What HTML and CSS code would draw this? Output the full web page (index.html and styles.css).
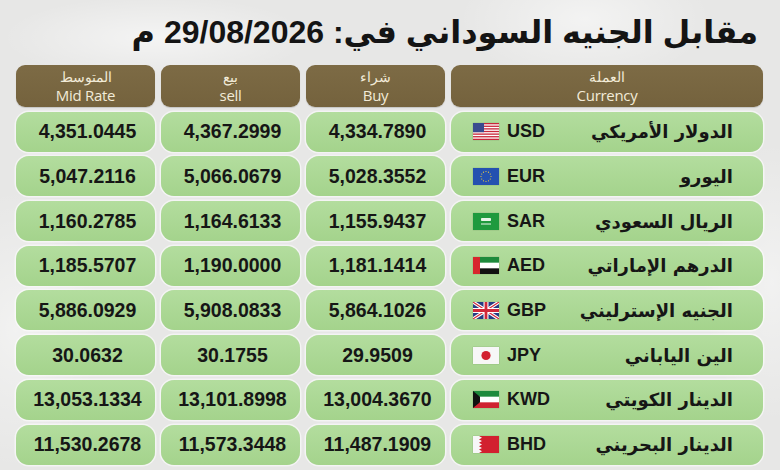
FILE: index.html
```html
<!DOCTYPE html>
<html lang="ar">
<head>
<meta charset="utf-8">
<title>أسعار العملات</title>
<link rel="stylesheet" href="styles.css">
</head>
<body>
<div class="page">
  <h1 class="title" dir="rtl">مقابل الجنيه السوداني في: 29/08/2026 م</h1>
  <div class="table" dir="rtl">
    <div class="head"><span class="ar">العملة</span><span class="en">Currency</span></div>
    <div class="head"><span class="ar">شراء</span><span class="en">Buy</span></div>
    <div class="head"><span class="ar">بيع</span><span class="en">sell</span></div>
    <div class="head"><span class="ar">المتوسط</span><span class="en">Mid Rate</span></div>

    <div class="cur" dir="ltr">
      <svg class="flag" viewBox="0 0 26 17"><rect width="26" height="17" fill="#fff"/><g fill="#c8283a"><rect y="0" width="26" height="1.31"/><rect y="2.62" width="26" height="1.31"/><rect y="5.23" width="26" height="1.31"/><rect y="7.85" width="26" height="1.31"/><rect y="10.46" width="26" height="1.31"/><rect y="13.08" width="26" height="1.31"/><rect y="15.69" width="26" height="1.31"/></g><rect width="11" height="9.2" fill="#3a4b8f"/></svg>
      <span class="code">USD</span><span class="name" dir="rtl">الدولار الأمريكي</span>
    </div>
    <div class="num">4,334.7890</div><div class="num">4,367.2999</div><div class="num">4,351.0445</div>

    <div class="cur" dir="ltr">
      <svg class="flag" viewBox="0 0 26 17"><rect width="26" height="17" fill="#2451b0"/><g fill="#f5d33a"><circle cx="13" cy="3.5" r=".6"/><circle cx="15.5" cy="4.2" r=".6"/><circle cx="17.3" cy="6" r=".6"/><circle cx="18" cy="8.5" r=".6"/><circle cx="17.3" cy="11" r=".6"/><circle cx="15.5" cy="12.8" r=".6"/><circle cx="13" cy="13.5" r=".6"/><circle cx="10.5" cy="12.8" r=".6"/><circle cx="8.7" cy="11" r=".6"/><circle cx="8" cy="8.5" r=".6"/><circle cx="8.7" cy="6" r=".6"/><circle cx="10.5" cy="4.2" r=".6"/></g></svg>
      <span class="code">EUR</span><span class="name" dir="rtl">اليورو</span>
    </div>
    <div class="num">5,028.3552</div><div class="num">5,066.0679</div><div class="num">5,047.2116</div>

    <div class="cur" dir="ltr">
      <svg class="flag" viewBox="0 0 26 17"><rect width="26" height="17" fill="#1f9a3e"/><rect x="8" y="5" width="10" height="3" rx=".8" fill="#e8f5e9"/><rect x="8" y="10.5" width="10" height="1" fill="#e8f5e9"/></svg>
      <span class="code">SAR</span><span class="name" dir="rtl">الريال السعودي</span>
    </div>
    <div class="num">1,155.9437</div><div class="num">1,164.6133</div><div class="num">1,160.2785</div>

    <div class="cur" dir="ltr">
      <svg class="flag" viewBox="0 0 26 17"><rect width="26" height="17" fill="#fff"/><rect x="7" width="19" height="5.67" fill="#1e8a3c"/><rect x="7" y="11.33" width="19" height="5.67" fill="#111"/><rect width="7" height="17" fill="#d8262d"/></svg>
      <span class="code">AED</span><span class="name" dir="rtl">الدرهم الإماراتي</span>
    </div>
    <div class="num">1,181.1414</div><div class="num">1,190.0000</div><div class="num">1,185.5707</div>

    <div class="cur" dir="ltr">
      <svg class="flag" viewBox="0 0 26 17"><rect width="26" height="17" fill="#253c84"/><path d="M0 0L26 17M26 0L0 17" stroke="#fff" stroke-width="3.4"/><path d="M0 0L26 17M26 0L0 17" stroke="#d0283a" stroke-width="1.1"/><path d="M13 0V17M0 8.5H26" stroke="#fff" stroke-width="5"/><path d="M13 0V17M0 8.5H26" stroke="#d0283a" stroke-width="2.8"/></svg>
      <span class="code">GBP</span><span class="name" dir="rtl">الجنيه الإسترليني</span>
    </div>
    <div class="num">5,864.1026</div><div class="num">5,908.0833</div><div class="num">5,886.0929</div>

    <div class="cur" dir="ltr">
      <svg class="flag" viewBox="0 0 26 17"><rect width="26" height="17" fill="#f7f7f7"/><circle cx="13" cy="8.5" r="4.6" fill="#d2202f"/></svg>
      <span class="code">JPY</span><span class="name" dir="rtl">الين الياباني</span>
    </div>
    <div class="num">29.9509</div><div class="num">30.1755</div><div class="num">30.0632</div>

    <div class="cur" dir="ltr">
      <svg class="flag" viewBox="0 0 26 17"><rect width="26" height="17" fill="#fff"/><rect width="26" height="5.67" fill="#1e8a3c"/><rect y="11.33" width="26" height="5.67" fill="#cf2230"/><polygon points="0,0 7,5.67 7,11.33 0,17" fill="#111"/></svg>
      <span class="code">KWD</span><span class="name" dir="rtl">الدينار الكويتي</span>
    </div>
    <div class="num">13,004.3670</div><div class="num">13,101.8998</div><div class="num">13,053.1334</div>

    <div class="cur" dir="ltr">
      <svg class="flag" viewBox="0 0 26 17"><rect width="26" height="17" fill="#d2202f"/><polygon points="0,0 6,0 9,1.7 6,3.4 9,5.1 6,6.8 9,8.5 6,10.2 9,11.9 6,13.6 9,15.3 6,17 0,17" fill="#f7f7f7"/></svg>
      <span class="code">BHD</span><span class="name" dir="rtl">الدينار البحريني</span>
    </div>
    <div class="num">11,487.1909</div><div class="num">11,573.3448</div><div class="num">11,530.2678</div>
  </div>
</div>
</body>
</html>
```

FILE: styles.css
```css
html, body {
  margin: 0;
  padding: 0;
}
body {
  width: 780px;
  height: 470px;
  overflow: hidden;
  background-color: #e7e7e6;
  background-image:
    radial-gradient(ellipse 220px 60px at 20% 8%, rgba(255,255,255,0.55), rgba(255,255,255,0) 70%),
    radial-gradient(ellipse 180px 90px at 75% 4%, rgba(255,255,255,0.5), rgba(255,255,255,0) 70%),
    radial-gradient(ellipse 120px 200px at 2% 70%, rgba(255,255,255,0.45), rgba(255,255,255,0) 70%),
    radial-gradient(ellipse 100px 200px at 99% 60%, rgba(255,255,255,0.45), rgba(255,255,255,0) 70%);
  font-family: "Liberation Sans", "DejaVu Sans", sans-serif;
}
.page {
  padding: 0 17px 0 17px;
}
.title {
  margin: 0;
  height: 65px;
  box-sizing: border-box;
  padding: 13px 5px 0 0;
  font-size: 32px;
  line-height: 38px;
  font-weight: 700;
  color: #141414;
  text-align: right;
  font-family: "Liberation Sans", "DejaVu Sans", sans-serif;
}
.table {
  display: grid;
  grid-template-columns: 312px 139px 139px 139px;
  grid-template-rows: 42px repeat(8, 40px);
  column-gap: 6px;
  row-gap: 4.7px;
}
.head {
  background: linear-gradient(#7d6b45, #74623d);
  border-radius: 9px;
  color: #f2ebd8;
  display: flex;
  flex-direction: column;
  align-items: center;
  justify-content: center;
  box-shadow: 0 1px 1px rgba(0,0,0,0.15);
}
.head .ar {
  font-family: "DejaVu Sans", sans-serif;
  font-size: 14px;
  line-height: 18px;
  font-weight: 300;
}
.head .en {
  font-family: "Open Sans", "Liberation Sans", sans-serif;
  font-size: 15px;
  line-height: 18px;
  letter-spacing: -0.3px;
}
.num, .cur {
  background: linear-gradient(#b3dd9e, #a4d38c);
  border-radius: 13px;
  box-shadow: 0 0 0 1.5px rgba(255,255,255,0.55);
}
.num {
  display: flex;
  align-items: center;
  justify-content: center;
  direction: ltr;
  font-size: 19.5px;
  font-weight: 700;
  color: #161616;
  padding-left: 4px;
}
.cur {
  display: flex;
  align-items: center;
  padding: 0 30px 0 22px;
}
.flag {
  width: 26px;
  height: 17px;
  flex: none;
  box-shadow: 0 0 1px rgba(0,0,0,0.3);
}
.code {
  margin-left: 8px;
  font-size: 18px;
  font-weight: 700;
  color: #161616;
}
.name {
  margin-left: auto;
  font-family: "DejaVu Sans", sans-serif;
  font-size: 18px;
  font-weight: 700;
  color: #161616;
}
```
